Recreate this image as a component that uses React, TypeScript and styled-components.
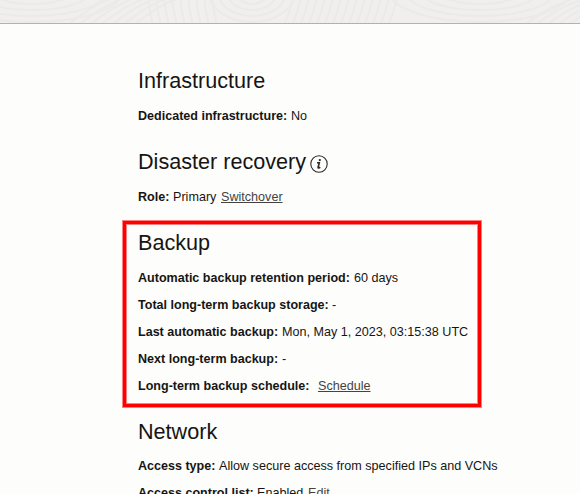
import React from "react";
import styled, { createGlobalStyle } from "styled-components";

const GlobalStyle = createGlobalStyle`
  html, body, #root { height: 100%; }
  body {
    margin: 0;
    overflow: hidden;
    background: #fdfdfb;
    color: #161513;
    font: 12.6px/29px "Liberation Sans", Arial, sans-serif;
  }
`;

const Page = styled.div`
  display: flex;
  flex-direction: column;
  height: 494px;
  overflow: hidden;
`;

const Banner = styled.header`
  flex: none;
  height: 23px;
  background: #f0efed;
  border-bottom: 1px solid #b3b2b0;
`;

const Texture = styled.svg`
  display: block;
  width: 100%;
  height: 23px;
`;

const Details = styled.main`
  padding: 24px 0 0 138px;
`;

const Section = styled.section`
  position: relative;
`;

const Heading = styled.h2<{ $h?: number }>`
  display: flex;
  align-items: center;
  gap: 4px;
  box-sizing: border-box;
  height: ${(p) => p.$h ?? 54}px;
  margin: 0;
  padding-top: 11px;
  font-size: 21.6px;
  font-weight: 400;
  line-height: 43px;
  white-space: nowrap;
`;

const InfoIcon = styled.svg`
  width: 18px;
  height: 18px;
  margin-top: 4px;
`;

const Row = styled.div`
  display: flex;
  height: 27px;
  white-space: nowrap;
`;

const Label = styled.span<{ $w: number }>`
  flex: none;
  width: ${(p) => p.$w}px;
  font-size: 12.55px;
  font-weight: 700;
`;

const Value = styled.span<{ $w?: number }>`
  flex: none;
  width: ${(p) => (p.$w ? `${p.$w}px` : "auto")};
`;

const Link = styled.a`
  color: #454340;
  text-decoration: underline;
  text-underline-offset: 1px;
  text-decoration-thickness: 1px;
`;

const Highlight = styled.div`
  position: absolute;
  inset: 11px auto auto -15px;
  box-sizing: border-box;
  width: 358px;
  height: 186px;
  border: 3px solid #ff0000;
  box-shadow: 0 0 0 1px #ff8080, inset 0 0 0 1px #ff8080;
  pointer-events: none;
`;

const waves = Array.from({ length: 9 }, (_, i) => 148 + i * 8);
const leaning = Array.from({ length: 14 }, (_, i) => 290 + i * 8);
const slopes = Array.from({ length: 7 }, (_, i) => i * 11);
const bowls = [
  { x: 32, widths: [40, 58, 74, 90] },
  { x: 252, widths: [16, 25, 34, 43] },
  { x: 480, widths: [40, 58, 74, 90] },
];

const BannerTexture = () => (
  <Texture viewBox="0 0 580 23" preserveAspectRatio="none">
    <g fill="none" stroke="#ebeae8" strokeWidth="2">
      {bowls.map((b) =>
        b.widths.map((w, i) => (
          <ellipse key={`${b.x}-${w}`} cx={b.x} cy="-8" rx={w} ry={12 + i * 6} />
        ))
      )}
      {waves.map((x) => (
        <path key={x} d={`M${x} -2 Q${x + 1} 10 ${x + 5} 25`} />
      ))}
      {leaning.map((x) => (
        <path key={x} d={`M${x + 3} -2 Q${x} 12 ${x - 6} 25`} />
      ))}
      {slopes.map((s) => (
        <React.Fragment key={s}>
          <path d={`M${68 + s} 25 Q${88 + s} 8 ${112 + s} -2`} />
          <path d={`M${525 + s} 25 Q${545 + s} 8 ${575 + s} -2`} />
        </React.Fragment>
      ))}
    </g>
  </Texture>
);

const App = () => (
  <>
    <GlobalStyle />
    <Page>
      <Banner>
        <BannerTexture />
      </Banner>
      <Details>
        <Section>
          <Heading>Infrastructure</Heading>
          <Row><Label $w={153}>Dedicated infrastructure:</Label><Value>No</Value></Row>
        </Section>
        <Section>
          <Heading>
            <span>Disaster recovery</span>
            <InfoIcon viewBox="0 0 18 18" fill="none" stroke="#2c2a28">
              <circle cx="9" cy="9" r="8.2" strokeWidth="1.1" />
              <path d="M7 7.7h2.3L8.1 12.2q-.2 1.1.7.8l1.5-.8" strokeWidth="1.6" />
              <circle cx="9.8" cy="5.1" r="1.15" fill="#2c2a28" stroke="none" />
            </InfoIcon>
          </Heading>
          <Row><Label $w={35}>Role:</Label><Value $w={48}>Primary</Value><Link>Switchover</Link></Row>
        </Section>
        <Section>
          <Heading>Backup</Heading>
          <Row><Label $w={216}>Automatic backup retention period:</Label><Value>60 days</Value></Row>
          <Row><Label $w={194}>Total long-term backup storage:</Label><Value>-</Value></Row>
          <Row><Label $w={144}>Last automatic backup:</Label><Value>Mon, May 1, 2023, 03:15:38 UTC</Value></Row>
          <Row><Label $w={144}>Next long-term backup:</Label><Value>-</Value></Row>
          <Row><Label $w={180}>Long-term backup schedule:</Label><Link>Schedule</Link></Row>
          <Highlight />
        </Section>
        <Section>
          <Heading $h={53}>Network</Heading>
          <Row><Label $w={81}>Access type:</Label><Value>Allow secure access from specified IPs and VCNs</Value></Row>
          <Row><Label $w={119}>Access control list:</Label><Value $w={51}>Enabled</Value><Link>Edit</Link></Row>
        </Section>
      </Details>
    </Page>
  </>
);

export default App;
